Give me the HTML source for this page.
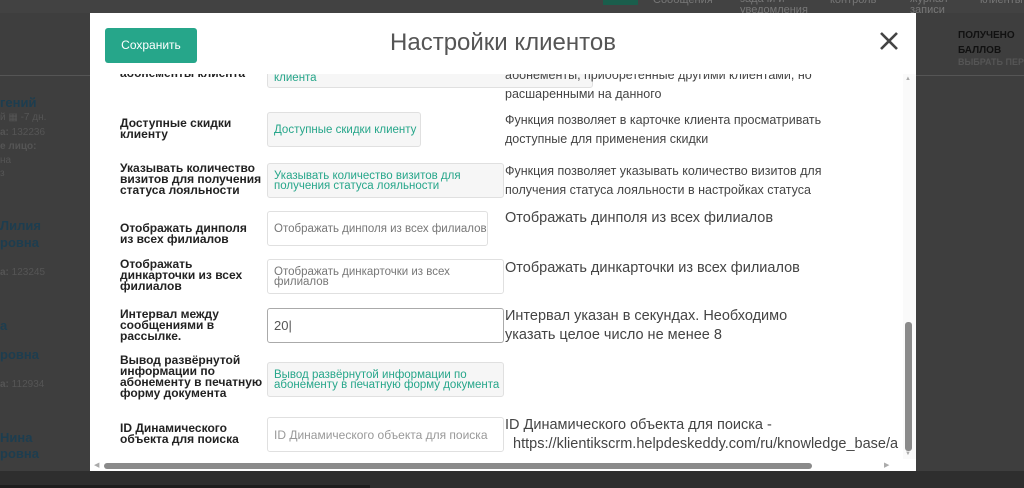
<!DOCTYPE html>
<html><head><meta charset="utf-8"><style>
body{margin:0;width:1024px;height:488px;overflow:hidden;background:#3e3e3e;font-family:"Liberation Sans",sans-serif;position:relative}
.a{position:absolute;white-space:nowrap}
.bg{color:#1d3d4f;font-size:13px;font-weight:bold}
.bs{color:#555;font-size:10px}
.modal{position:absolute;left:90px;top:13px;width:826px;height:458px;background:#fff}
.btn{position:absolute;left:15px;top:15px;width:92px;height:35px;background:#26a68a;border-radius:3px;color:#fff;font-size:12px;line-height:35px;text-align:center}
.title{position:absolute;left:0;width:826px;top:16px;text-align:center;font-size:24px;color:#555}
.x{position:absolute;left:786px;top:15px;width:26px;height:26px}
.clip{position:absolute;left:0;top:61px;width:813px;height:385px;overflow:hidden}
.lab{position:absolute;left:30px;width:150px;font-size:12px;font-weight:bold;color:#222;line-height:11px;white-space:nowrap}
.in{position:absolute;left:177px;box-sizing:border-box;border:1px solid #e0e0e0;border-radius:3px;font-size:11.5px;line-height:10px;padding:0 6px;display:flex;align-items:center;color:#777;white-space:nowrap}
.g{background:#f6f6f6;color:#26a68a}
.d{position:absolute;left:415px;font-size:12.5px;color:#444;line-height:19px;white-space:nowrap}
.d2{position:absolute;left:415px;font-size:14.5px;color:#444;line-height:19px;white-space:nowrap}
</style></head><body>
<div class="a" style="left:0;top:0;width:1024px;height:13px;background:#424242"></div>
<div class="a" style="left:603px;top:0;width:35px;height:5px;background:#1a5e4c"></div>
<div class="a" style="left:653px;top:-6px;font-size:11px;color:#777">Сообщения</div>
<div class="a" style="left:740px;top:-6px;font-size:11px;color:#777;line-height:11px">задачи и<br>уведомления</div>
<div class="a" style="left:830px;top:-6px;font-size:11px;color:#777">контроль</div>
<div class="a" style="left:910px;top:-6px;font-size:11px;color:#777;line-height:11px">журнал<br>записи</div>
<div class="a" style="left:980px;top:-6px;font-size:11px;color:#777">клиенты</div>
<div class="a" style="left:0;top:75px;width:90px;height:1px;background:#555"></div>
<div class="a" style="left:916px;top:75px;width:108px;height:1px;background:#555"></div>
<div class="a" style="left:958px;top:28px;font-size:10px;font-weight:bold;color:#111;line-height:15px">ПОЛУЧЕНО<br>БАЛЛОВ</div>
<div class="a" style="left:958px;top:57px;font-size:9px;font-weight:bold;color:#555">ВЫБРАТЬ ПЕР</div>
<div class="a bg" style="left:0;top:95px">гений</div>
<div class="a bs" style="left:0;top:112px">й ▦ -7 дн.</div>
<div class="a bs" style="left:0;top:127px"><b>а:</b> 132236</div>
<div class="a bs" style="left:0;top:141px"><b>е лицо:</b></div>
<div class="a bs" style="left:0;top:155px">на</div>
<div class="a bs" style="left:0;top:168px">з</div>
<div class="a bg" style="left:0;top:218px">Лилия</div>
<div class="a bg" style="left:0;top:235px">ровна</div>
<div class="a bs" style="left:0;top:267px"><b>а:</b> 123245</div>
<div class="a bg" style="left:0;top:318px">а</div>
<div class="a bg" style="left:0;top:347px">ровна</div>
<div class="a bs" style="left:0;top:379px"><b>а:</b> 112934</div>
<div class="a bg" style="left:0;top:430px">Нина</div>
<div class="a bg" style="left:0;top:446px">ровна</div>
<div class="a" style="left:0;top:471px;width:1024px;height:17px;background:#2e2e2e"></div>
<div class="a" style="left:0;top:485px;width:370px;height:3px;background:#1e1e1e"></div>
<div class="modal">
<div class="btn">Сохранить</div>
<div class="title">Настройки клиентов</div>
<svg class="x" viewBox="0 0 26 26"><path d="M5 5L21 21M21 5L5 21" stroke="#444" stroke-width="2.6"/></svg>
<div class="clip">
<div class="lab" style="top:-6px">абонементы клиента</div>
<div class="in g" style="top:-20px;width:326px;height:34px;padding-top:14px">клиента</div>
<div class="d" style="top:-8px">абонементы, приобретенные другими клиентами, но<br>расшаренными на данного</div>
<div class="lab" style="top:44px">Доступные скидки<br>клиенту</div>
<div class="in g" style="top:38px;width:154px;height:35px">Доступные скидки клиенту</div>
<div class="d" style="top:37px">Функция позволяет в карточке клиента просматривать<br>доступные для применения скидки</div>
<div class="lab" style="top:89px">Указывать количество<br>визитов для получения<br>статуса лояльности</div>
<div class="in g" style="top:89px;width:237px;height:35px">Указывать количество визитов для<br>получения статуса лояльности</div>
<div class="d" style="top:88px">Функция позволяет указывать количество визитов для<br>получения статуса лояльности в настройках статуса</div>
<div class="lab" style="top:149px">Отображать динполя<br>из всех филиалов</div>
<div class="in" style="top:137px;width:221px;height:35px">Отображать динполя из всех филиалов</div>
<div class="d2" style="top:135px">Отображать динполя из всех филиалов</div>
<div class="lab" style="top:185px">Отображать<br>динкарточки из всех<br>филиалов</div>
<div class="in" style="top:185px;width:237px;height:35px">Отображать динкарточки из всех<br>филиалов</div>
<div class="d2" style="top:185px">Отображать динкарточки из всех филиалов</div>
<div class="lab" style="top:235px">Интервал между<br>сообщениями в<br>рассылке.</div>
<div class="in" style="top:234px;width:237px;height:35px;border-color:#aaa;font-size:13px;color:#555">20|</div>
<div class="d2" style="top:233px">Интервал указан в секундах. Необходимо<br>указать целое число не менее 8</div>
<div class="lab" style="top:281px">Вывод развёрнутой<br>информации по<br>абонементу в печатную<br>форму документа</div>
<div class="in g" style="top:288px;width:237px;height:35px">Вывод развёрнутой информации по<br>абонементу в печатную форму документа</div>
<div class="lab" style="top:349px">ID Динамического<br>объекта для поиска</div>
<div class="in" style="top:343px;width:237px;height:35px;color:#999;font-size:12px">ID Динамического объекта для поиска</div>
<div class="d2" style="top:342px">ID Динамического объекта для поиска -<br>&nbsp;&nbsp;https://klientikscrm.helpdeskeddy.com/ru/knowledge_base/a</div>
</div>
<div class="a" style="left:813px;top:61px;width:13px;height:385px;background:#fafafa"></div>
<div class="a" style="left:815px;top:309px;width:7px;height:129px;background:#8a8a8a;border-radius:3px"></div>
<div class="a" style="left:815px;top:63px;font-size:6px;color:#aaa">▲</div>
<div class="a" style="left:815px;top:438px;font-size:6px;color:#aaa">▼</div>
<div class="a" style="left:14px;top:450px;width:708px;height:6px;background:#8a8a8a;border-radius:3px"></div>
<div class="a" style="left:4px;top:448px;font-size:7px;color:#aaa">◀</div>
<div class="a" style="left:794px;top:448px;font-size:7px;color:#aaa">▶</div>
</div>
</body></html>
